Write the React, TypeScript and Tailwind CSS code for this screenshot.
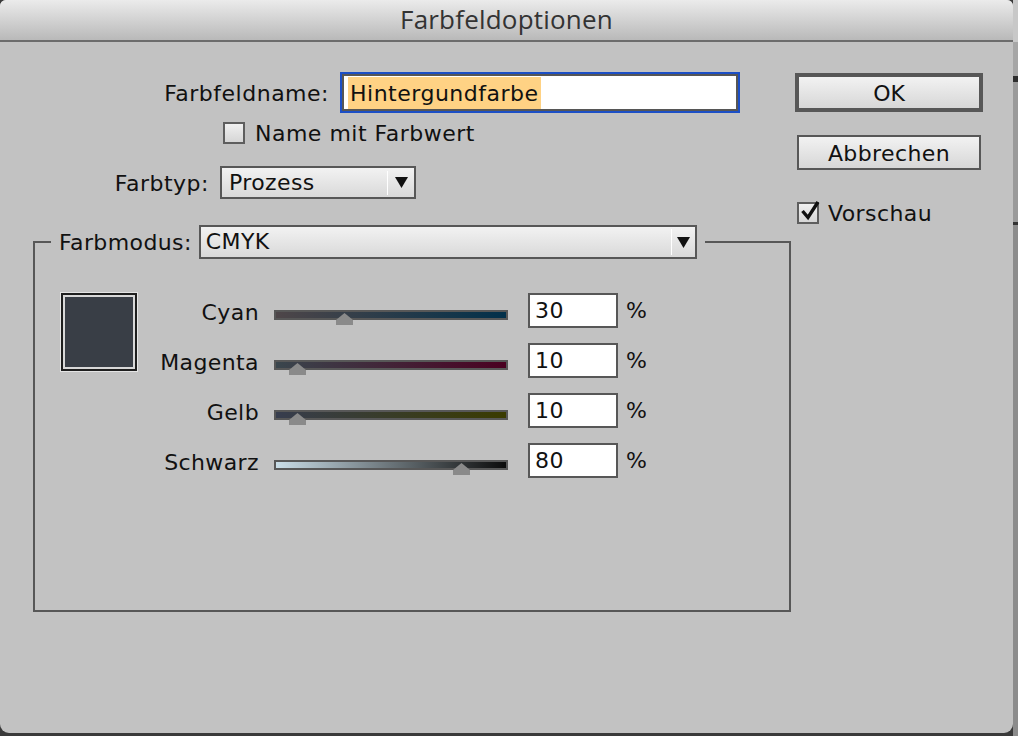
import React from "react";

const FONT = "font-['DejaVu_Sans',sans-serif]";

function Thumb({ value }: { value: number }) {
  const left = (234 * value) / 100 - 8.5;
  return (
    <svg
      className="absolute top-[3px]"
      style={{ left }}
      width="17"
      height="12"
      viewBox="0 0 17 12"
    >
      <polygon points="8.5,0 17,7 17,12 0,12 0,7" fill="#8a8a8a" />
    </svg>
  );
}

function SliderRow({
  label,
  value,
  grad,
}: {
  label: string;
  value: number;
  grad: string;
}) {
  return (
    <div className="flex items-center h-[35px]">
      <span className="w-[121px] text-right text-[22px] tracking-[0.4px] text-[#111] leading-none pt-[4px]">
        {label}
      </span>
      <div className="relative ml-[15px] w-[234px] h-[10px] mt-[9px]">
        <div className={`w-full h-full border-2 border-[#575757] ${grad}`} />
        <Thumb value={value} />
      </div>
      <div className="ml-[20px] w-[90px] h-[35px] border-2 border-[#575757] bg-white flex items-center pl-[5px] text-[22px] text-[#111] leading-none tracking-[0.4px]">
        {value}
      </div>
      <span className="ml-[8px] text-[22px] text-[#111] leading-none">%</span>
    </div>
  );
}

function Arrow() {
  return (
    <svg width="13" height="11" viewBox="0 0 13 11">
      <polygon points="0,0 13,0 6.5,11" fill="#111" />
    </svg>
  );
}

export default function App() {
  return (
    <div
      className={`w-[1018px] h-[736px] bg-[#3a3a3a] flex overflow-hidden ${FONT}`}
    >
      <div className="w-[1013px] h-[733px] bg-[#c2c2c2] rounded-t-[6px] rounded-b-[9px] flex flex-col overflow-hidden shrink-0">
        {/* Title bar */}
        <div className="h-[42px] shrink-0 bg-[linear-gradient(to_bottom,#ebebeb,#b9b9b9)] border-b-2 border-[#6c6c6c] flex items-center justify-center">
          <span className="font-['Open_Sans',sans-serif] text-[26px] text-[#333] leading-none pb-[2px] tracking-[0.2px]">
            Farbfeldoptionen
          </span>
        </div>

        {/* Body */}
        <div className="flex">
          {/* Left column */}
          <div className="w-[795px] shrink-0 flex flex-col">
            {/* Farbfeldname */}
            <div className="flex items-center mt-[30px]">
              <span className="w-[329px] text-right text-[22px] tracking-[0.5px] text-[#111] leading-none pt-[2px]">
                Farbfeldname:
              </span>
              <div className="ml-[11px] w-[400px] h-[41px] border-2 border-[#1c4fc6]">
                <div className="w-full h-full border-2 border-[#565656] bg-white flex items-center pl-[4px]">
                  <span className="bg-[#ffd284] text-[22px] tracking-[0.5px] text-[#111] leading-[31px] px-[2px] pt-[1px]">
                    Hintergundfarbe
                  </span>
                </div>
              </div>
            </div>

            {/* Name mit Farbwert */}
            <div className="flex items-center mt-[8px] pl-[223px]">
              <div className="w-[22px] h-[22px] border-2 border-[#5e5e5e] bg-[linear-gradient(to_bottom,#f0f0f0,#d6d6d6)]" />
              <span className="ml-[10px] text-[22px] tracking-[0.5px] text-[#111] leading-none pt-[2px]">
                Name mit Farbwert
              </span>
            </div>

            {/* Farbtyp */}
            <div className="flex items-center mt-[21px]">
              <span className="w-[209px] text-right text-[22px] tracking-[0.5px] text-[#111] leading-none pt-[2px]">
                Farbtyp:
              </span>
              <div className="ml-[11px] w-[196px] h-[33px] border-2 border-[#575757] bg-[linear-gradient(to_bottom,#f2f2f2,#d9d9d9)] flex items-center">
                <span className="ml-[7px] flex-1 text-[22px] tracking-[0.4px] text-[#111] leading-none">
                  Prozess
                </span>
                <div className="w-[1px] h-[24px] bg-[#9a9a9a] border-r border-white" />
                <div className="w-[26px] flex justify-center">
                  <Arrow />
                </div>
              </div>
            </div>

            {/* Farbmodus fieldset */}
            <fieldset className="mt-[26px] ml-[33px] w-[758px] h-[387px] border-2 border-[#575757] min-w-0">
              <legend className="ml-[16px] px-[8px]">
                <div className="flex items-center">
                  <span className="text-[22px] tracking-[0.4px] text-[#111] leading-none pt-[2px]">
                    Farbmodus:
                  </span>
                  <div className="ml-[7px] w-[498px] h-[34px] border-2 border-[#575757] bg-[linear-gradient(to_bottom,#f2f2f2,#d9d9d9)] flex items-center">
                    <span className="ml-[5px] flex-1 text-[22px] tracking-[0.4px] text-[#111] leading-none">
                      CMYK
                    </span>
                    <div className="w-[1px] h-[26px] bg-[#9a9a9a] border-r border-white" />
                    <div className="w-[23px] flex justify-center">
                      <Arrow />
                    </div>
                  </div>
                </div>
              </legend>

              <div className="flex pl-[25px]">
                <div className="mt-[33px] w-[78px] h-[80px] border border-[#e4e4e4] shrink-0">
                  <div className="w-full h-full border-2 border-[#1e1e1e]">
                    <div className="w-full h-full border-2 border-[#d8d8d8] bg-[#393e46]" />
                  </div>
                </div>
                <div className="mt-[34px] flex flex-col gap-[15px]">
                  <SliderRow
                    label="Cyan"
                    value={30}
                    grad="bg-[linear-gradient(to_right,#4e4649,#02304a)]"
                  />
                  <SliderRow
                    label="Magenta"
                    value={10}
                    grad="bg-[linear-gradient(to_right,#3a464d,#4a0021)]"
                  />
                  <SliderRow
                    label="Gelb"
                    value={10}
                    grad="bg-[linear-gradient(to_right,#373d4e,#3a3b00)]"
                  />
                  <SliderRow
                    label="Schwarz"
                    value={80}
                    grad="bg-[linear-gradient(to_right,#c9dde7,#0b0b0b)]"
                  />
                </div>
              </div>
            </fieldset>
          </div>

          {/* Right column */}
          <div className="flex flex-col">
            <button className="mt-[31px] w-[188px] h-[39px] border-[4px] border-[#575757] bg-[linear-gradient(to_bottom,#f2f2f2,#d7d7d7)] text-[22px] text-[#111] leading-none pt-[2px]">
              OK
            </button>
            <button className="mt-[23px] ml-[2px] w-[184px] h-[35px] border-2 border-[#575757] bg-[linear-gradient(to_bottom,#f2f2f2,#d7d7d7)] text-[22px] tracking-[0.4px] text-[#111] leading-none pt-[2px]">
              Abbrechen
            </button>
            <div className="mt-[31px] ml-[2px] flex items-center">
              <div className="relative w-[22px] h-[22px] border-2 border-[#5e5e5e] bg-[linear-gradient(to_bottom,#f0f0f0,#d6d6d6)]">
                <svg
                  className="absolute left-[1px] top-[-4px]"
                  width="20"
                  height="21"
                  viewBox="0 0 20 21"
                >
                  <path
                    d="M2.5 11 L8 17.5 L18 2"
                    fill="none"
                    stroke="#111"
                    strokeWidth="3.4"
                    strokeLinejoin="miter"
                  />
                </svg>
              </div>
              <span className="ml-[9px] text-[22px] tracking-[0.4px] text-[#111] leading-none pt-[2px]">
                Vorschau
              </span>
            </div>
          </div>
        </div>
      </div>
      <div className="flex-1 flex flex-col">
        <div className="h-[42px] bg-[#c8c8c8]" />
        <div className="h-[34px] bg-[#a6a6a6]" />
        <div className="h-[6px] bg-[#2e2e2e]" />
        <div className="h-[140px] bg-[#9a9a9a]" />
        <div className="h-[3px] bg-[#333]" />
        <div className="flex-1 bg-[#8c8c8c]" />
      </div>
    </div>
  );
}
